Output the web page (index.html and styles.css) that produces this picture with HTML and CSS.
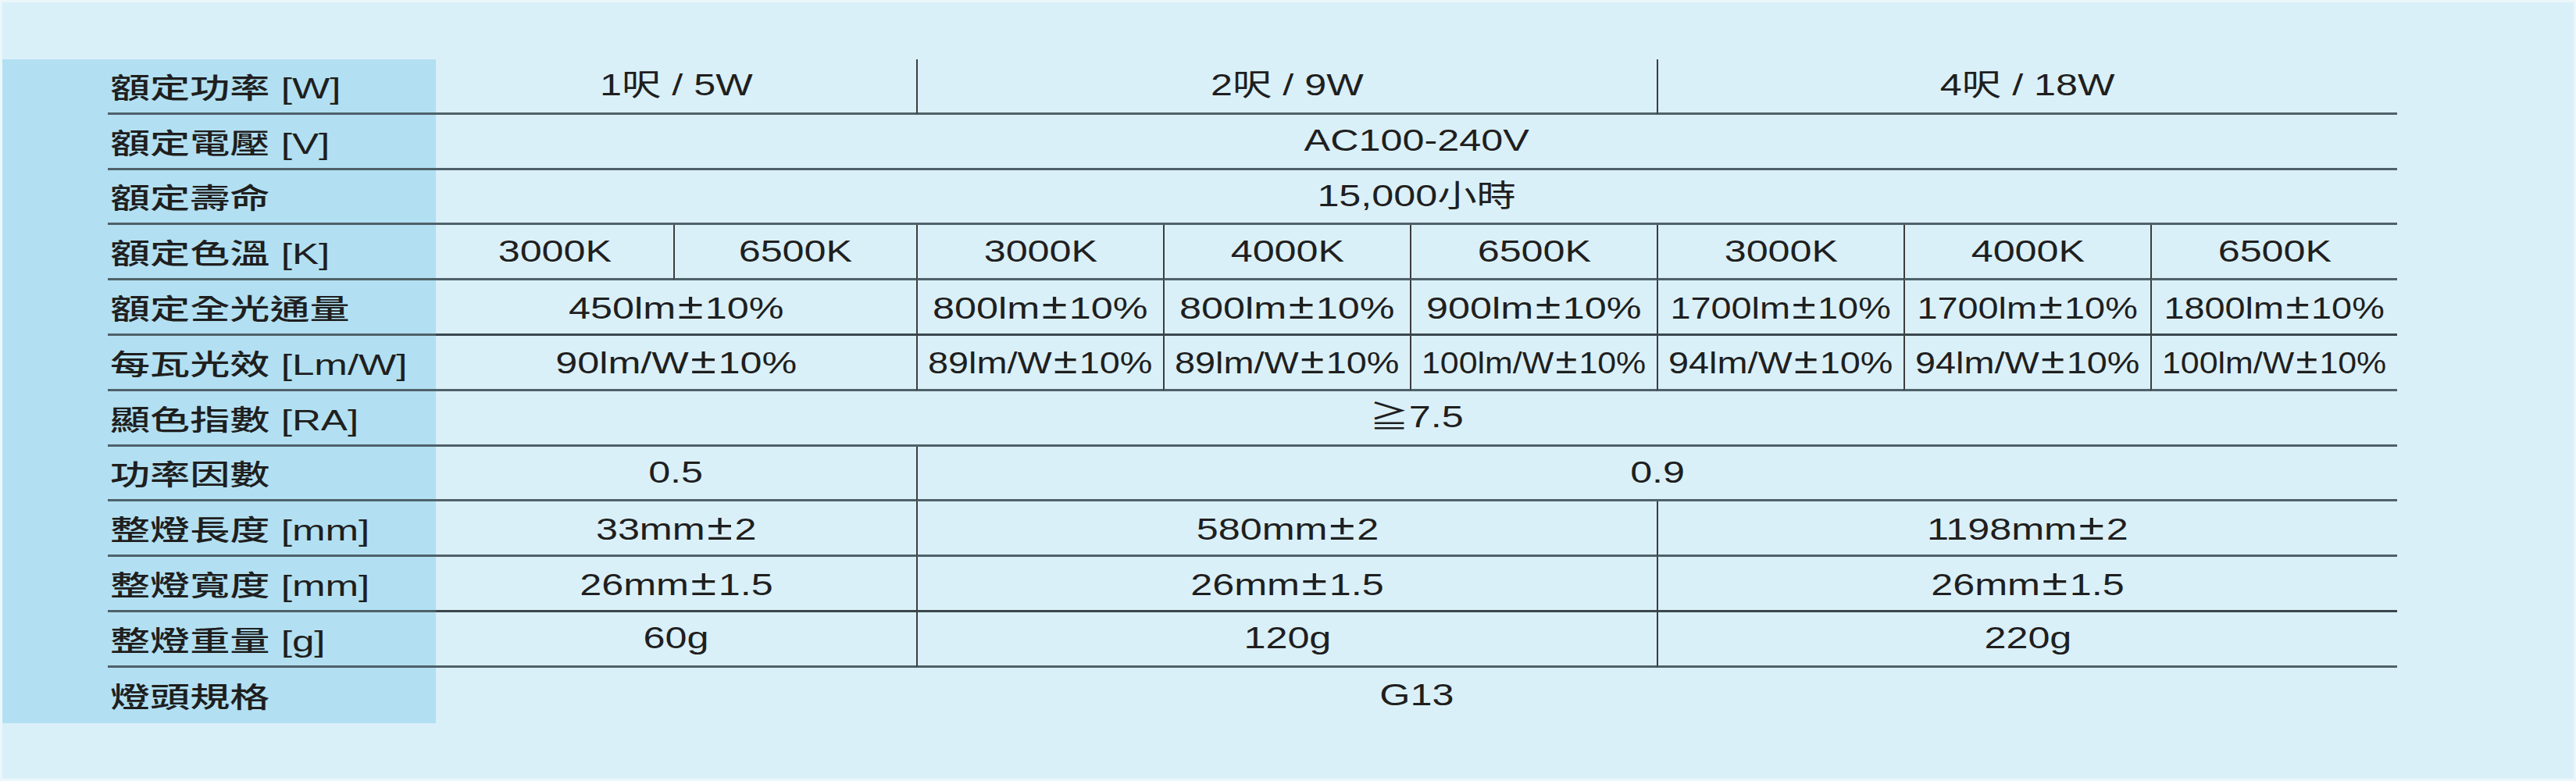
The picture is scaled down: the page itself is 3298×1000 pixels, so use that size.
FILE: index.html
```html
<!DOCTYPE html>
<html lang="zh-Hant">
<head>
  <meta charset="UTF-8">
  <title>T8 LED 燈管規格</title>
  <link rel="stylesheet" href="styles.css">
</head>
<body>

  <div class="spec-sheet">
    <div class="spec-grid">
      <div class="spec-side"></div>

      <!-- 額定功率 -->
      <div class="spec-label"><span class="txt">額定功率 <span class="unit">[W]</span></span></div>
      <div class="spec-cell span-2"><span class="txt">1呎 / 5W</span></div>
      <div class="spec-cell span-3 sep"><span class="txt">2呎 / 9W</span></div>
      <div class="spec-cell span-3 sep"><span class="txt">4呎 / 18W</span></div>

      <div class="spec-label"><span class="txt">額定電壓 <span class="unit">[V]</span></span></div>
      <div class="spec-cell span-all"><span class="txt">AC100-240V</span></div>

      <div class="spec-label"><span class="txt">額定壽命</span></div>
      <div class="spec-cell span-all"><span class="txt">15,000小時</span></div>

      <!-- 色溫 -->
      <div class="spec-label"><span class="txt">額定色溫 <span class="unit">[K]</span></span></div>
      <div class="spec-cell"><span class="txt">3000K</span></div>
      <div class="spec-cell sep"><span class="txt">6500K</span></div>
      <div class="spec-cell sep"><span class="txt">3000K</span></div>
      <div class="spec-cell sep"><span class="txt">4000K</span></div>
      <div class="spec-cell sep"><span class="txt">6500K</span></div>
      <div class="spec-cell sep"><span class="txt">3000K</span></div>
      <div class="spec-cell sep"><span class="txt">4000K</span></div>
      <div class="spec-cell sep"><span class="txt">6500K</span></div>

      <div class="spec-label"><span class="txt">額定全光通量</span></div>
      <div class="spec-cell span-2 heavy"><span class="txt">450lm<span class="pm">±</span>10%</span></div>
      <div class="spec-cell sep heavy"><span class="txt">800lm<span class="pm">±</span>10%</span></div>
      <div class="spec-cell sep heavy"><span class="txt">800lm<span class="pm">±</span>10%</span></div>
      <div class="spec-cell sep heavy"><span class="txt">900lm<span class="pm">±</span>10%</span></div>
      <div class="spec-cell sep heavy"><span class="txt tight">1700lm<span class="pm">±</span>10%</span></div>
      <div class="spec-cell sep heavy"><span class="txt tight">1700lm<span class="pm">±</span>10%</span></div>
      <div class="spec-cell sep heavy"><span class="txt tight">1800lm<span class="pm">±</span>10%</span></div>

      <div class="spec-label"><span class="txt">每瓦光效 <span class="unit">[Lm/W]</span></span></div>
      <div class="spec-cell span-2"><span class="txt">90lm/W<span class="pm">±</span>10%</span></div>
      <div class="spec-cell sep"><span class="txt tight">89lm/W<span class="pm">±</span>10%</span></div>
      <div class="spec-cell sep"><span class="txt tight">89lm/W<span class="pm">±</span>10%</span></div>
      <div class="spec-cell sep"><span class="txt tighter">100lm/W<span class="pm">±</span>10%</span></div>
      <div class="spec-cell sep"><span class="txt tight">94lm/W<span class="pm">±</span>10%</span></div>
      <div class="spec-cell sep"><span class="txt tight">94lm/W<span class="pm">±</span>10%</span></div>
      <div class="spec-cell sep"><span class="txt tighter">100lm/W<span class="pm">±</span>10%</span></div>

      <div class="spec-label"><span class="txt">顯色指數 <span class="unit">[RA]</span></span></div>
      <div class="spec-cell span-all"><span class="txt">≧7.5</span></div>

      <div class="spec-label"><span class="txt">功率因數</span></div>
      <div class="spec-cell span-2"><span class="txt">0.5</span></div>
      <div class="spec-cell span-6 sep"><span class="txt">0.9</span></div>

      <!-- 尺寸 / 重量 -->
      <div class="spec-label"><span class="txt">整燈長度 <span class="unit">[mm]</span></span></div>
      <div class="spec-cell span-2"><span class="txt">33mm<span class="pm">±</span>2</span></div>
      <div class="spec-cell span-3 sep"><span class="txt">580mm<span class="pm">±</span>2</span></div>
      <div class="spec-cell span-3 sep"><span class="txt">1198mm<span class="pm">±</span>2</span></div>

      <div class="spec-label"><span class="txt">整燈寬度 <span class="unit">[mm]</span></span></div>
      <div class="spec-cell span-2 heavy"><span class="txt">26mm<span class="pm">±</span>1.5</span></div>
      <div class="spec-cell span-3 sep heavy"><span class="txt">26mm<span class="pm">±</span>1.5</span></div>
      <div class="spec-cell span-3 sep heavy"><span class="txt">26mm<span class="pm">±</span>1.5</span></div>

      <div class="spec-label"><span class="txt">整燈重量 <span class="unit">[g]</span></span></div>
      <div class="spec-cell span-2"><span class="txt">60g</span></div>
      <div class="spec-cell span-3 sep"><span class="txt">120g</span></div>
      <div class="spec-cell span-3 sep"><span class="txt">220g</span></div>

      <div class="spec-label no-line"><span class="txt">燈頭規格</span></div>
      <div class="spec-cell span-all no-line"><span class="txt">G13</span></div>
    </div>
  </div>

</body>
</html>
```

FILE: styles.css
```css
body {
  margin: 0;
  padding: 0;
  background-color: #daf0f8;
  font-family: "Liberation Sans", Arial, "Noto Sans CJK TC", sans-serif;
  color: #1f1f1f;
}
.spec-sheet {
  height: 1000px;
  box-sizing: border-box;
  border: 3px solid #ecf7fb;
  background-color: #daf0f8;
}
.spec-grid {
  display: grid;
  grid-template-columns: 135px 420px 304px 311px repeat(6, 316px);
  grid-template-rows: repeat(12, 70.8px);
  margin-top: 73px;
}
.spec-side {
  grid-column: 1;
  grid-row: 1 / -1;
  background-color: #b2e0f2;
}
.spec-label {
  display: flex;
  align-items: center;
  padding-left: 3px;
  background-color: #b2e0f2;
  border-bottom: 3px solid #4f6169;
  font-family: "Liberation Sans", "Noto Sans CJK TC", sans-serif;
  font-size: 36px;
  font-weight: 500;
  white-space: nowrap;
}
.spec-label .txt {
  display: inline-block;
  transform: scaleX(1.42);
  transform-origin: left center;
}
.spec-label .unit {
  font-weight: 400;
}
.spec-cell {
  display: flex;
  align-items: center;
  justify-content: center;
  border-bottom: 3px solid #4f6169;
  font-size: 39px;
  line-height: 1.15;
  white-space: nowrap;
  box-sizing: border-box;
}
.spec-cell .txt {
  display: inline-block;
  transform: scaleX(1.29);
}
.spec-cell .tight {
  transform: scaleX(1.2);
}
.spec-cell .tighter {
  transform: scaleX(1.1);
}
.pm {
  font-size: 46px;
  line-height: 1;
  margin: 0 2px;
}
.heavy {
  border-bottom-color: #3a474d;
}
.sep {
  border-left: 2px solid #3d3d3d;
}
.span-2 {
  grid-column: span 2;
}
.span-3 {
  grid-column: span 3;
}
.span-6 {
  grid-column: span 6;
}
.span-all {
  grid-column: span 8;
}
.no-line {
  border-bottom: none;
}
```
